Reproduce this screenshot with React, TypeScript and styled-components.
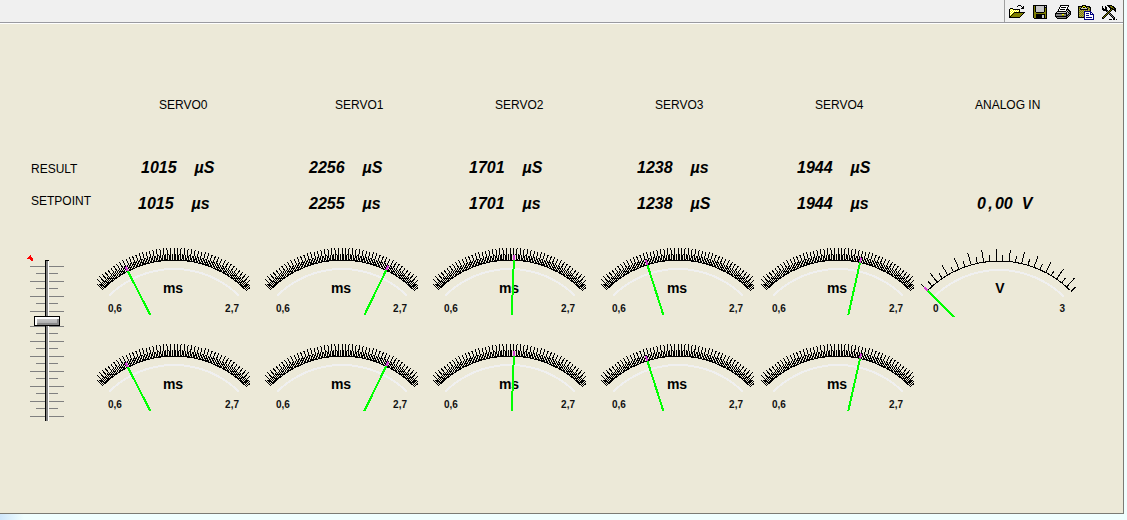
import React, { useId, useState } from "react";
import styled, { createGlobalStyle } from "styled-components";

const GlobalStyle = createGlobalStyle`
  * { box-sizing: border-box; }
  body {
    margin: 0;
    background: #f0ffff;
    color: #000;
    font-family: "Liberation Sans", Arial, sans-serif;
    font-size: 12px;
    line-height: 16px;
  }
`;

const Page = styled.div`
  min-height: 100vh;
  padding-right: 3px;
  background: linear-gradient(to right, #cfe6fb, #f0ffff 24px);
`;

const Window = styled.div`
  border-right: 1px solid #7b7b74;
  border-bottom: 1px solid #7b7b74;
  background: #ece9d8;
`;

const Toolbar = styled.header`
  display: flex;
  justify-content: flex-end;
  height: 24px;
  border-bottom: 1px solid #fff;
  background: #f0f0f0;
  box-shadow: inset 0 -1px #9a9aa0;
`;

const ToolGroup = styled.div`
  display: flex;
  align-items: flex-start;
  padding: 5px 3px 0 0;
  height: 22px;
  border-left: 1px solid #a0a0a0;
`;

const ToolButton = styled.button`
  display: flex;
  justify-content: center;
  width: 23px;
  height: 16px;
  padding: 0;
  border: 0;
  background: none;
  cursor: pointer;
`;

const Panel = styled.main`
  display: grid;
  grid-template-columns: 97px 168fr 168fr 168fr 160fr 160fr 202fr;
  grid-template-rows: 64px 32px 40px 96px 169px;
  padding-top: 73px;
  padding-bottom: 15px;
`;

const Cell = styled.div<{ $indent?: number; $top?: number }>`
  padding-left: ${(p) => p.$indent ?? 0}px;
  padding-top: ${(p) => p.$top ?? 0}px;
  white-space: nowrap;
`;

const Heading = styled.h2`
  margin: 0;
  font-size: 12px;
  font-weight: 400;
`;

const RowLabel = styled.div`
  grid-column: 1;
  padding-left: 31px;
`;

const Value = styled.output`
  display: flex;
  gap: 18px;
  font-size: 16px;
  font-weight: 700;
  font-style: italic;
  line-height: 14px;
`;

const Volts = styled(Value)`
  gap: 9px;
`;

const Comma = styled.span`
  display: inline-block;
  width: 9px;
  text-align: center;
`;

const SliderCell = styled.div`
  grid-column: 1;
  grid-row: 4 / 6;
  padding: 21px 0 0 24px;
`;

const SliderBox = styled.div`
  position: relative;
  width: 44px;
  height: 172px;
`;

const Scale = styled.svg`
  display: block;
`;

const Slider = styled.input`
  position: absolute;
  left: 10px;
  top: 6px;
  width: 26px;
  height: 161px;
  margin: 0;
  appearance: none;
  writing-mode: vertical-lr;
  direction: rtl;
  background:
    linear-gradient(#000, #000) 11px 0 / 4px 1px no-repeat,
    linear-gradient(to right, #000 1px, #808080 1px 3px, #fff 3px) 11px 0 / 4px 161px no-repeat;

  &::-webkit-slider-thumb {
    appearance: none;
    width: 26px;
    height: 10px;
    border: 1px solid #000;
    background: linear-gradient(#d0d0d0, #a8a8a8);
    box-shadow: inset 2px 2px #fff, inset -2px -2px #888;
  }
`;

const GaugeSvg = styled.svg`
  display: block;
  width: 153px;
  height: 80px;
  font-weight: 700;
`;

const PALETTE: Record<string, string> = {
  K: "#000000",
  O: "#808000",
  Y: "#ffff00",
  W: "#ffffff",
  G: "#c8c8c8",
  D: "#808080",
  B: "#000080",
  L: "#a8a060",
};

const ICONS: Record<string, string[]> = {
  Open: [
    "..........KKK....",
    ".........K...K.K.",
    "..............KK.",
    "..KKK........KKK.",
    ".KYWYKKKKKKK.....",
    ".KWYWYWYWYWK.....",
    ".KYWYWYWYWYK.....",
    ".KWYWYKKKKKKKKKKK",
    ".KYWYKOOOOOOOOOK.",
    ".KWYKOOOOOOOOOK..",
    ".KYKOOOOOOOOOK...",
    ".KKOOOOOOOOOK....",
    ".KKKKKKKKKKK.....",
  ],
  Save: [
    "KKKKKKKKKKKKKK",
    "KOKGGGGGGGGKGK",
    "KOKGGGGGGGGKKK",
    "KOKGGGGGGGGKOK",
    "KOKGGGGGGGGKOK",
    "KOKGGGGGGGGKOK",
    "KOKGGGGGGGGKOK",
    "KOOKKKKKKKKOOK",
    "KOOOOOOOOOOOOK",
    "KOOKKKKKKKKKOK",
    "KOOKKKKKKGGKOK",
    "KOOKKKKKKGGKOK",
    "KOOKKKKKKGGKOK",
    ".KKKKKKKKKKKKK",
  ],
  Print: [
    ".....KKKKKKKKK..",
    ".....KWWWWWWWK..",
    "....KWKKKKKWK...",
    "....KWWWWWWWK...",
    "...KWKKKKKWKKK..",
    "...KWWWWWWWKGKK.",
    "..KKKKKKKKKGKGKK",
    ".KGGGGGGGGGKGKDK",
    "KKKKKKKKKKKKGDKK",
    "KDDDDDDYYDDKDKDK",
    "KDDDDDDOODDKKDK.",
    "KKKKKKKKKKKKDK..",
    ".KDDDDDDDDDKK...",
    "..KKKKKKKKKK....",
  ],
  Paste: [
    "....KKKK........",
    "KKKKKYYKKKKK....",
    "KOLKYKKYKLOKK...",
    "KOKGGGGGGKOLK...",
    "KLKKKKKKKKLOK...",
    "KOLOLOLOLOLOK...",
    "KLOLOLBBBBBBB...",
    "KOLOLOBWWWWWBB..",
    "KLOLOLBWBBBWBWB.",
    "KOLOLOBWWWWWBBBB",
    "KLOLOLBWBBBWWWWB",
    "KOLOLOBWWWWWWWWB",
    "KKKKKKBWBBBBBBWB",
    "......BWWWWWWWWB",
    "......BBBBBBBBBB",
  ],
  Tools: [
    ".......KKKKK.....",
    "..K..K..KKOOKK...",
    "..K..KK..KKOOKK..",
    "..KK.KK...KKKOKK.",
    "..KKKKK...KOKKKK.",
    "...KKKKK.KOK..KK.",
    "......KDKOK....K.",
    ".......KOK.......",
    "......KOKDK......",
    ".....KOK.KDK.....",
    "....KOK...KDK....",
    "...KOK.....KDK...",
    "..KOK.......KDK..",
    "..KK.........KK..",
    ".........KKK.KK.K",
  ],
};

function PixelIcon({ name }: { name: string }) {
  const rows = ICONS[name];
  const width = rows[0].length;
  return (
    <svg
      width={width}
      height={rows.length}
      viewBox={`0 0 ${width} ${rows.length}`}
      shapeRendering="crispEdges"
      aria-hidden="true"
    >
      {rows.flatMap((row, y) =>
        [...row].map((c, x) =>
          c === "." ? null : (
            <rect key={`${x}-${y}`} x={x} y={y} width={1} height={1} fill={PALETTE[c]} />
          )
        )
      )}
    </svg>
  );
}

type Point = { x: number; y: number };

function polar(r: number, deg: number, c: Point) {
  const a = (deg * Math.PI) / 180;
  return [c.x + r * Math.sin(a), c.y - r * Math.cos(a)];
}

function ray(r1: number, r2: number, deg: number, c: Point) {
  const [x1, y1] = polar(r1, deg, c);
  const [x2, y2] = polar(r2, deg, c);
  return `M${x1.toFixed(2)} ${y1.toFixed(2)}L${x2.toFixed(2)} ${y2.toFixed(2)}`;
}

function arc(r: number, c: Point) {
  const [x1, y1] = polar(r, -45, c);
  const [x2, y2] = polar(r, 45, c);
  return `M${x1} ${y1}A${r} ${r} 0 0 1 ${x2} ${y2}`;
}

type GaugeProps = {
  value: number;
  min: number;
  max: number;
  step: number;
  unit: string;
  from: string;
  to: string;
  wide?: boolean;
};

function Gauge({ value, min, max, step, unit, from, to, wide }: GaugeProps) {
  const id = useId();
  const c = wide ? { x: 78, y: 116 } : { x: 77, y: 115 };
  const base = wide ? 71 : 69;
  const needle = -45 + (90 * (value - min)) / (max - min);
  let ticks = "";
  for (let i = 0; -45 + (i * step) / 2 <= 46; i++) {
    ticks += ray(101, i % 2 ? 107 : 113, -45 + (i * step) / 2, c);
  }
  return (
    <GaugeSvg viewBox="0 0 153 80" overflow="visible" role="img" aria-label={`${value} ${unit}`}>
      <clipPath id={id}>
        <rect width={wide ? 156 : 153} height={base} />
      </clipPath>
      <path d={arc(92, c)} fill="none" stroke="#f0f0f0" strokeWidth={2} shapeRendering="crispEdges" />
      <text x={wide ? 79 : 76} y={47} fontSize={14} textAnchor="middle">{unit}</text>
      <text x={wide ? 12 : 11} y={66} fontSize={10} fill="#111">{from}</text>
      <text x={wide ? 144 : 142} y={66} fontSize={10} fill="#111" textAnchor="end">{to}</text>
      <g clipPath={`url(#${id})`} fill="none" shapeRendering="crispEdges">
        <path d={ticks + arc(101, c)} stroke="#000" />
        <path d={ray(40, 101, needle, c)} stroke="#00ff00" strokeWidth={2} />
        <path d={ray(101, 106, needle, c)} stroke="#d040d0" strokeWidth={2} />
      </g>
    </GaugeSvg>
  );
}

const SERVOS = [
  { name: "SERVO0", head: 62, result: 1015, ru: "µS", ri: 44, setpoint: 1015, su: "µs", si: 41 },
  { name: "SERVO1", head: 70, result: 2256, ru: "µS", ri: 44, setpoint: 2255, su: "µs", si: 44 },
  { name: "SERVO2", head: 62, result: 1701, ru: "µS", ri: 36, setpoint: 1701, su: "µs", si: 36 },
  { name: "SERVO3", head: 54, result: 1238, ru: "µs", ri: 36, setpoint: 1238, su: "µS", si: 36 },
  { name: "SERVO4", head: 54, result: 1944, ru: "µS", ri: 36, setpoint: 1944, su: "µs", si: 36 },
];

function ServoGauge({ us }: { us: number }) {
  return <Gauge value={us / 1000} min={0.6} max={2.7} step={1.8} unit="ms" from="0,6" to="2,7" />;
}

function MasterSlider() {
  const [level, setLevel] = useState(63);
  const marks = Array.from({ length: 21 }, (_, i) => {
    const y = 12 + Math.floor(i * 7.5);
    return i % 2 ? `M12 ${y}.5h9M25 ${y}.5h9` : `M6 ${y}.5h15M25 ${y}.5h15`;
  }).join("");
  return (
    <SliderBox>
      <Scale width="44" height="172" shapeRendering="crispEdges" aria-hidden="true">
        <path d={marks} stroke="#808080" />
        <path d="M3 4L7 1V3L9 4V7H7L6 5H3Z" fill="#ff0000" />
      </Scale>
      <Slider
        type="range"
        aria-label="Servo position"
        min={0}
        max={100}
        value={level}
        onChange={(e) => setLevel(Number(e.target.value))}
      />
    </SliderBox>
  );
}

export default function App() {
  return (
    <Page>
      <GlobalStyle />
      <Window>
        <Toolbar>
          <ToolGroup>
            {Object.keys(ICONS).map((name) => (
              <ToolButton key={name} type="button" aria-label={name}>
                <PixelIcon name={name} />
              </ToolButton>
            ))}
          </ToolGroup>
        </Toolbar>
        <Panel>
          <Cell />
          {SERVOS.map((s) => (
            <Cell key={s.name} $indent={s.head}>
              <Heading>{s.name}</Heading>
            </Cell>
          ))}
          <Cell $indent={54}>
            <Heading>ANALOG IN</Heading>
          </Cell>

          <RowLabel>RESULT</RowLabel>
          {SERVOS.map((s) => (
            <Cell key={s.name} $indent={s.ri}>
              <Value>
                <span>{s.result}</span>
                <span>{s.ru}</span>
              </Value>
            </Cell>
          ))}
          <Cell />

          <RowLabel>SETPOINT</RowLabel>
          {SERVOS.map((s) => (
            <Cell key={s.name} $indent={s.si} $top={4}>
              <Value>
                <span>{s.setpoint}</span>
                <span>{s.su}</span>
              </Value>
            </Cell>
          ))}
          <Cell $indent={56} $top={4}>
            <Volts>
              <span>0<Comma>,</Comma>00</span>
              <span>V</span>
            </Volts>
          </Cell>

          <SliderCell>
            <MasterSlider />
          </SliderCell>
          {SERVOS.map((s) => (
            <Cell key={s.name} $top={13}>
              <ServoGauge us={s.result} />
            </Cell>
          ))}
          <Cell $top={13}>
            <Gauge value={0} min={0} max={3} step={7.25} unit="V" from="0" to="3" wide />
          </Cell>
          {SERVOS.map((s) => (
            <Cell key={s.name} $top={13}>
              <ServoGauge us={s.setpoint} />
            </Cell>
          ))}
        </Panel>
      </Window>
    </Page>
  );
}
